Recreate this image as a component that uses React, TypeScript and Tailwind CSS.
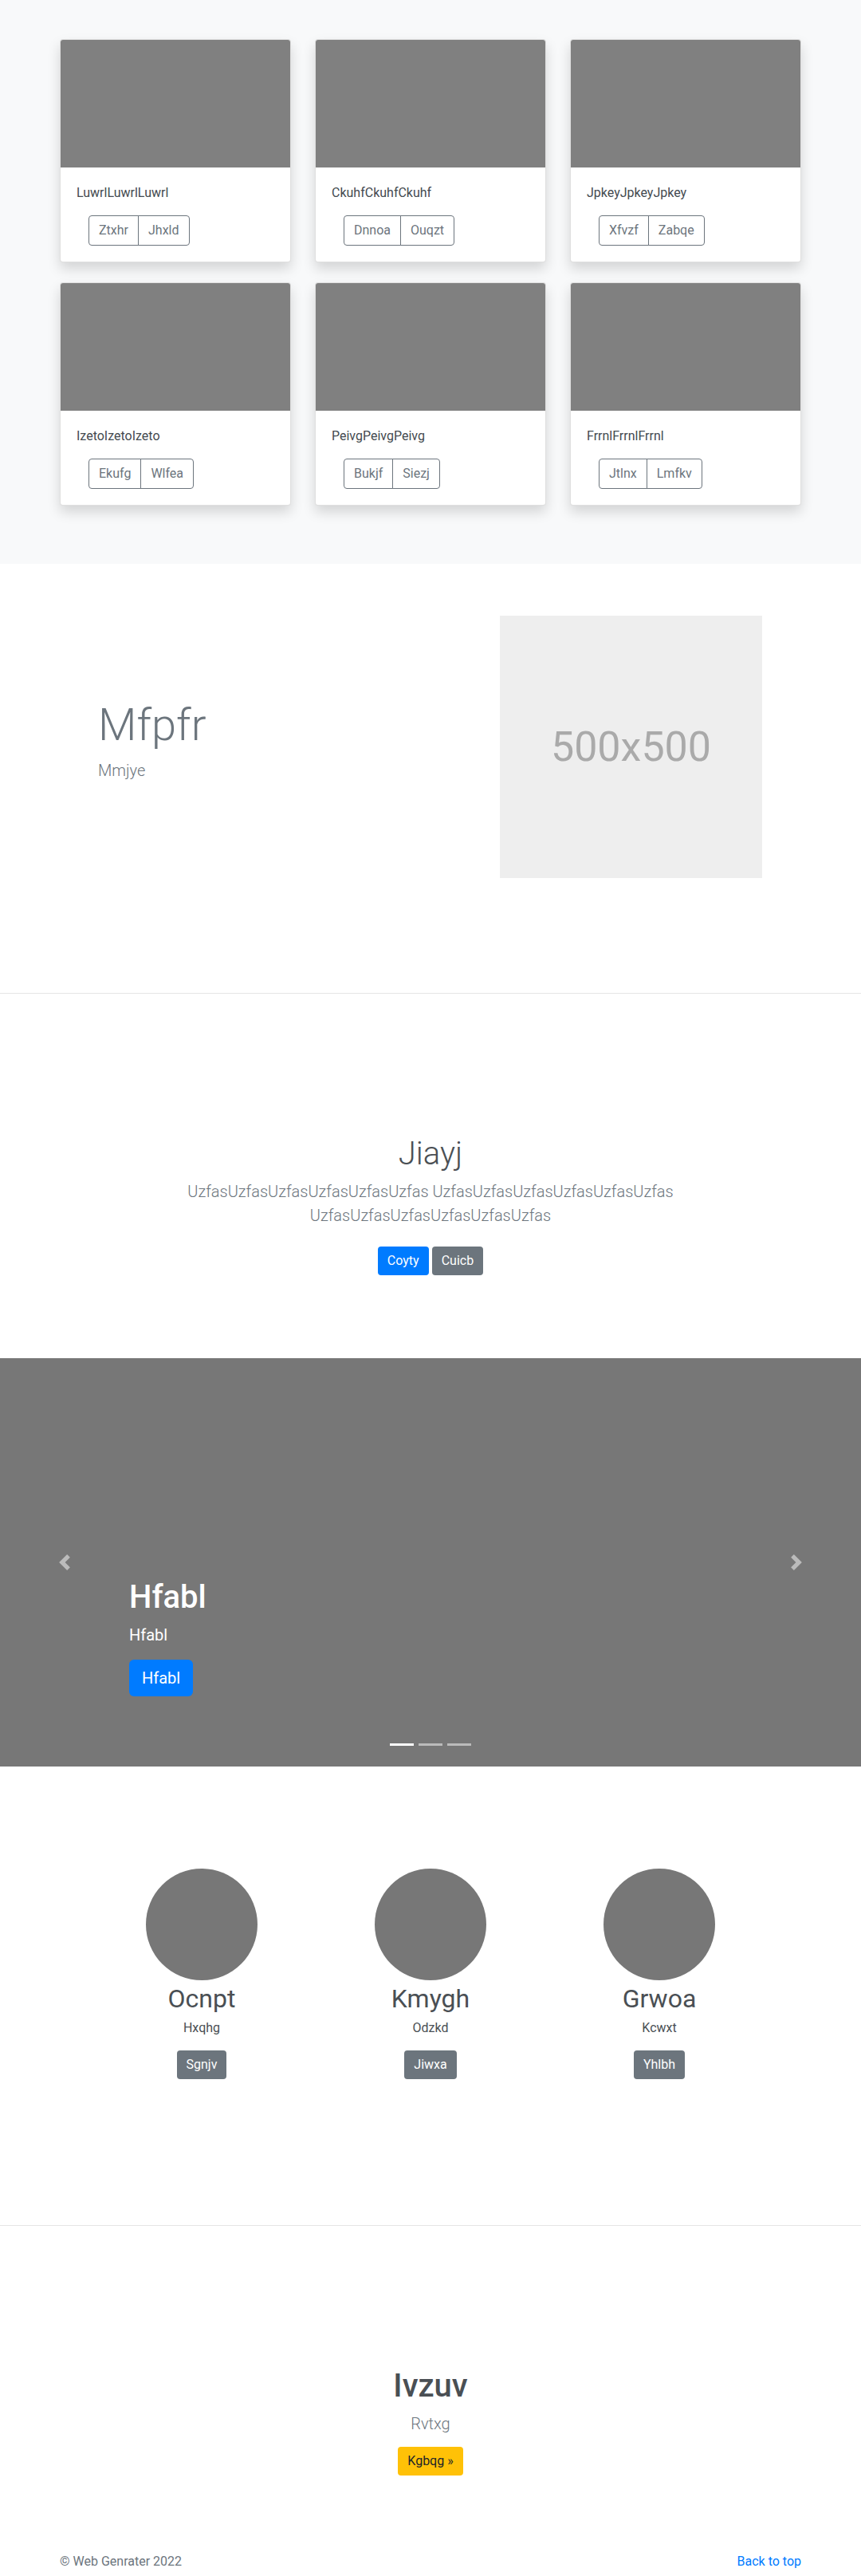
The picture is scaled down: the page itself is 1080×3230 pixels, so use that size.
import React from 'react'

interface AlbumCard {
  title: string
  actions: [string, string]
}

interface Member {
  name: string
  role: string
  action: string
}

const cards: AlbumCard[] = [
  { title: 'LuwrlLuwrlLuwrl', actions: ['Ztxhr', 'Jhxld'] },
  { title: 'CkuhfCkuhfCkuhf', actions: ['Dnnoa', 'Ouqzt'] },
  { title: 'JpkeyJpkeyJpkey', actions: ['Xfvzf', 'Zabqe'] },
  { title: 'IzetoIzetoIzeto', actions: ['Ekufg', 'Wlfea'] },
  { title: 'PeivgPeivgPeivg', actions: ['Bukjf', 'Siezj'] },
  { title: 'FrrnlFrrnlFrrnl', actions: ['Jtlnx', 'Lmfkv'] },
]

const members: Member[] = [
  { name: 'Ocnpt', role: 'Hxqhg', action: 'Sgnjv' },
  { name: 'Kmygh', role: 'Odzkd', action: 'Jiwxa' },
  { name: 'Grwoa', role: 'Kcwxt', action: 'Yhlbh' },
]

function Card({ card }: { card: AlbumCard }) {
  return (
    <div className="bg-white border border-black/[.125] rounded overflow-hidden shadow-[0_8px_16px_rgba(0,0,0,0.15)]">
      <div className="h-[160px] bg-[#808080]" />
      <div className="p-5">
        <p className="text-base leading-6 mb-4 text-[#444a50]">{card.title}</p>
        <div className="inline-flex ml-[15px]">
          <button className="px-3 py-[6px] text-base leading-6 text-[#6c757d] border border-[#6c757d] rounded-l">
            {card.actions[0]}
          </button>
          <button className="-ml-px px-3 py-[6px] text-base leading-6 text-[#6c757d] border border-[#6c757d] rounded-r">
            {card.actions[1]}
          </button>
        </div>
      </div>
    </div>
  )
}

function Chevron({ dir }: { dir: 'prev' | 'next' }) {
  return (
    <svg width="20" height="20" viewBox="0 0 8 8" fill="#fff">
      {dir === 'prev' ? (
        <path d="M5.25 0l-4 4 4 4 1.5-1.5L4.25 4l2.5-2.5L5.25 0z" />
      ) : (
        <path d="M2.75 0l-1.5 1.5L3.75 4l-2.5 2.5L2.75 8l4-4-4-4z" />
      )}
    </svg>
  )
}

export default function App() {
  return (
    <div className="min-h-screen bg-white text-[#3a3f44] font-['Roboto','Liberation_Sans',sans-serif]">
      {/* Album */}
      <section className="bg-[#f8f9fa] pt-[49px] pb-[73px]">
        <div className="w-[960px] mx-auto px-[15px] grid grid-cols-3 gap-x-[30px] gap-y-[25px]">
          {cards.map((card) => (
            <Card key={card.title} card={card} />
          ))}
        </div>
      </section>

      {/* Feature with placeholder */}
      <section className="pt-[65px] pb-[144px]">
        <div className="w-[960px] mx-auto px-[15px] flex items-center">
          <div className="w-[450px] p-12">
            <h1 className="text-[56px] leading-[1.2] font-light text-[#6c757d] mb-2">Mfpfr</h1>
            <p className="text-xl leading-[30px] font-light text-[#6c757d] mb-4">Mmjye</p>
          </div>
          <div className="ml-[102px] w-[329px] h-[329px] bg-[#eeeeee] flex items-center justify-center">
            <span className="text-[52px] text-[#aaaaaa]">500x500</span>
          </div>
        </div>
      </section>

      {/* Intro */}
      <section className="border-t border-[#e5e5e5] pt-[177px] pb-[96px] text-center">
        <h1 className="text-[40px] leading-[1.2] font-light text-[#4a4f54] mb-2">Jiayj</h1>
        <p className="max-w-[610px] mx-auto text-xl leading-[30px] font-light text-[#6c757d] mb-4">
          UzfasUzfasUzfasUzfasUzfasUzfas UzfasUzfasUzfasUzfasUzfasUzfas UzfasUzfasUzfasUzfasUzfasUzfas
        </p>
        <div className="flex justify-center gap-[4px]">
          <button className="my-2 px-3 py-[6px] text-base leading-6 text-white bg-[#007bff] rounded">Coyty</button>
          <button className="my-2 px-3 py-[6px] text-base leading-6 text-white bg-[#6c757d] rounded">Cuicb</button>
        </div>
      </section>

      {/* Carousel */}
      <section className="relative h-[512px] bg-[#777777] flex flex-col justify-end px-[15%] pb-[88px]">
        <h1 className="text-[40px] leading-[1.2] font-medium text-white mb-2">Hfabl</h1>
        <p className="text-xl leading-[30px] text-white mb-4">Hfabl</p>
        <div>
          <button className="px-4 py-2 text-xl leading-[30px] text-white bg-[#007bff] rounded-md">Hfabl</button>
        </div>
        <div className="absolute left-0 top-0 bottom-0 w-[15%] flex items-center justify-center opacity-50">
          <Chevron dir="prev" />
        </div>
        <div className="absolute right-0 top-0 bottom-0 w-[15%] flex items-center justify-center opacity-50">
          <Chevron dir="next" />
        </div>
        <div className="absolute left-0 right-0 bottom-[26px] flex justify-center gap-[6px]">
          <span className="w-[30px] h-[3px] bg-white" />
          <span className="w-[30px] h-[3px] bg-white/50" />
          <span className="w-[30px] h-[3px] bg-white/50" />
        </div>
      </section>

      {/* Team */}
      <section className="pt-[128px] pb-[183px]">
        <div className="w-[861px] mx-auto grid grid-cols-3">
          {members.map((m) => (
            <div key={m.name} className="flex flex-col items-center text-center">
              <div className="w-[140px] h-[140px] rounded-full bg-[#777777]" />
              <h2 className="mt-1 mb-[6px] text-[32px] leading-[1.2] font-normal text-[#4a4f54]">{m.name}</h2>
              <p className="text-base leading-6 mb-4 text-[#4a4f54]">{m.role}</p>
              <button className="px-3 py-[6px] text-base leading-6 text-white bg-[#6c757d] rounded">{m.action}</button>
            </div>
          ))}
        </div>
      </section>

      {/* Call to action */}
      <section className="border-t border-[#e5e5e5] pt-[177px] text-center">
        <h1 className="text-[40px] leading-[1.2] font-medium text-[#4a4f54] mb-2">Ivzuv</h1>
        <p className="text-xl leading-[30px] font-light text-[#6c757d] mb-[14px]">Rvtxg</p>
        <button className="px-3 py-[6px] text-base leading-6 text-[#212529] bg-[#ffc107] rounded">Kgbqg »</button>
      </section>

      {/* Footer */}
      <footer className="pt-[96px] pb-12 text-[#6c757d]">
        <div className="w-[960px] mx-auto px-[15px] flex justify-between text-base leading-6">
          <p>© Web Genrater 2022</p>
          <a href="#" className="text-[#007bff]">Back to top</a>
        </div>
      </footer>
    </div>
  )
}
